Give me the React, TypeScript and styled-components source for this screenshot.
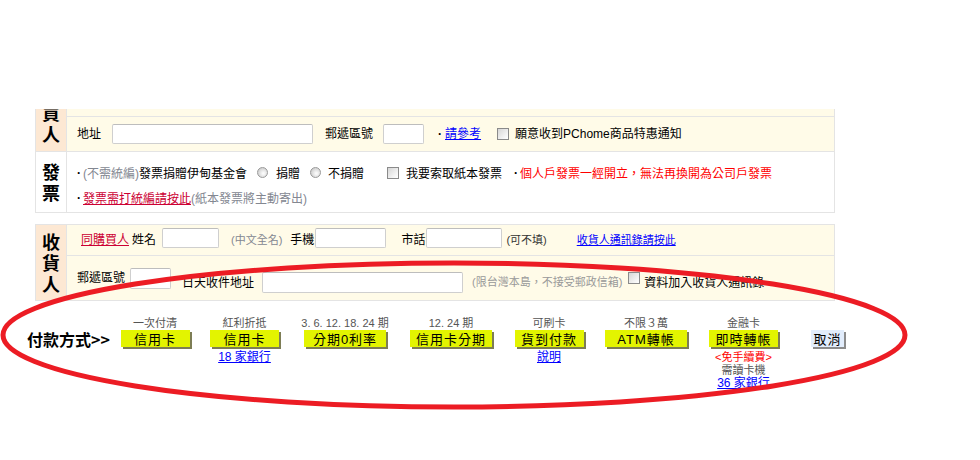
import { FC, ReactNode } from 'react';
import styled, { createGlobalStyle } from 'styled-components';

const GlobalStyle = createGlobalStyle`
  html, body {
    margin: 0;
    padding: 0;
    background: #fff;
  }
  body {
    font-family: "Liberation Sans", "Noto Sans CJK TC", sans-serif;
    font-size: 12px;
    color: #000;
  }
`;

const Page = styled.div`
  position: relative;
  width: 980px;
  height: 460px;
  overflow: hidden;
  padding-top: 109px;
  box-sizing: border-box;
`;

const Block = styled.div<{ $white?: boolean; $top?: boolean; $mt?: number; $h: number }>`
  display: grid;
  grid-template-columns: 31px 1fr;
  grid-template-rows: 100%;
  width: 800px;
  height: ${(p) => p.$h}px;
  margin-left: 35px;
  margin-top: ${(p) => p.$mt ?? 0}px;
  border: 1px solid #e4e4e4;
  border-top: ${(p) => (p.$top ? '1px solid #e4e4e4' : 'none')};
  background: ${(p) => (p.$white ? '#fff' : '#fffbe8')};
  box-sizing: border-box;
  overflow: hidden;
`;

const Label = styled.div<{ $white?: boolean; $bottom?: boolean }>`
  display: flex;
  flex-direction: column;
  align-items: center;
  justify-content: ${(p) => (p.$bottom ? 'flex-end' : 'center')};
  padding-bottom: ${(p) => (p.$bottom ? 7 : 0)}px;
  min-height: 0;
  overflow: hidden;
  background: ${(p) => (p.$white ? '#fff' : '#fde8d3')};
  border-right: 1px solid #e4e4e4;
  font-family: "Noto Sans CJK TC", sans-serif;
  font-weight: 700;
  font-size: 18px;
  line-height: 21px;
  span {
    display: block;
    flex-shrink: 0;
    height: 21px;
  }
`;

const Rows = styled.div`
  display: flex;
  flex-direction: column;
`;

const Row = styled.div<{ $h: number; $line?: boolean; $pad?: number }>`
  display: flex;
  align-items: center;
  height: ${(p) => p.$h}px;
  flex-shrink: 0;
  padding-left: ${(p) => p.$pad ?? 10}px;
  border-bottom: ${(p) => (p.$line ? '1px solid #e4e4e4' : 'none')};
  white-space: nowrap;
  line-height: 14px;
`;

const Lines = styled.div`
  display: flex;
  flex-direction: column;
  padding: 8px 0 2px 10px;
`;

const Line = styled.div`
  display: flex;
  align-items: center;
  height: 25px;
  white-space: nowrap;
`;

const Text = styled.span<{ $ml?: number; $tone?: 'gray' | 'note' | 'red' | 'dark'; $size?: number; $dy?: number }>`
  margin-left: ${(p) => p.$ml ?? 0}px;
  font-size: ${(p) => p.$size ?? 12}px;
  position: relative;
  top: ${(p) => p.$dy ?? 0}px;
  color: ${(p) =>
    p.$tone === 'gray' ? '#838791' : p.$tone === 'note' ? '#999' : p.$tone === 'red' ? '#ff0000' : p.$tone === 'dark' ? '#333' : '#000'};
`;

const Dot = styled.span<{ $ml?: number }>`
  margin-left: ${(p) => p.$ml ?? 0}px;
  width: 6px;
  text-align: left;
  font-weight: 700;
  font-size: 12px;
`;

const Link = styled.a<{ $red?: boolean; $ml?: number; $size?: number }>`
  margin-left: ${(p) => p.$ml ?? 0}px;
  font-size: ${(p) => p.$size ?? 12}px;
  color: ${(p) => (p.$red ? '#cc0033' : '#0000ff')};
  text-decoration: underline;
  cursor: pointer;
`;

const Input = styled.span<{ $w: number; $h?: number; $ml?: number; $dy?: number }>`
  display: inline-block;
  width: ${(p) => p.$w}px;
  height: ${(p) => p.$h ?? 20}px;
  margin-left: ${(p) => p.$ml ?? 0}px;
  position: relative;
  top: ${(p) => p.$dy ?? 0}px;
  background: #fff;
  border: 1px solid #cfcfcf;
  border-top-color: #bdbdbd;
  border-radius: 2px;
  box-sizing: border-box;
`;

const Check = styled.span<{ $ml?: number; $dy?: number }>`
  display: inline-block;
  width: 12px;
  height: 12px;
  margin-left: ${(p) => p.$ml ?? 0}px;
  position: relative;
  top: ${(p) => p.$dy ?? 0}px;
  border: 1px solid #8a8a8a;
  background: linear-gradient(135deg, #d6d6d6, #f4f4f4 70%, #fff);
  box-sizing: border-box;
`;

const Radio = styled.span<{ $ml?: number }>`
  display: inline-block;
  width: 11px;
  height: 11px;
  margin-left: ${(p) => p.$ml ?? 0}px;
  border-radius: 50%;
  border: 1px solid #9a9a9a;
  background: radial-gradient(circle at 60% 60%, #fafafa 10%, #cfcfcf 75%);
  box-sizing: border-box;
`;

const Pay = styled.div`
  display: flex;
  align-items: flex-start;
  padding-left: 27px;
  margin-top: 16px;
`;

const PayTitle = styled.div`
  width: 83px;
  margin-top: 13px;
  font-family: "Noto Sans CJK TC", sans-serif;
  font-weight: 700;
  font-size: 16px;
  line-height: 18px;
  white-space: nowrap;
`;

const Col = styled.div<{ $w: number }>`
  display: flex;
  flex-direction: column;
  align-items: center;
  width: ${(p) => p.$w}px;
  white-space: nowrap;
`;

const Cap = styled.div`
  height: 13px;
  line-height: 13px;
  font-size: 11px;
  color: #555;
`;

const Btn = styled.div<{ $w: number; $cancel?: boolean }>`
  display: flex;
  align-items: center;
  justify-content: center;
  width: ${(p) => p.$w}px;
  height: 17px;
  background: ${(p) => (p.$cancel ? '#e2edfc' : '#e3f400')};
  box-shadow: 2px 2px 0 ${(p) => (p.$cancel ? '#8c8c8c' : '#7d7d55')};
  font-size: 13px;
  letter-spacing: 1px;
  color: #000;
  cursor: pointer;
`;

const Sub = styled.div<{ $first?: boolean; $tone?: 'red' | 'gray' }>`
  margin-top: ${(p) => (p.$first ? 4 : 0)}px;
  height: 13px;
  line-height: 13px;
  font-size: 11px;
  color: ${(p) => (p.$tone === 'red' ? '#ff0000' : '#555')};
`;

const Mark = styled.svg`
  position: absolute;
  left: 0;
  top: 0;
  pointer-events: none;
`;

type Method = {
  cap: string;
  label: string;
  col: number;
  btn: number;
  extra?: ReactNode;
};

const methods: Method[] = [
  { cap: '一次付清', label: '信用卡', col: 90, btn: 69 },
  { cap: '紅利折抵', label: '信用卡', col: 89, btn: 69, extra: <Sub $first><Link $size={12}>18 家銀行</Link></Sub> },
  { cap: '3. 6. 12. 18. 24 期', label: '分期0利率', col: 112, btn: 82 },
  { cap: '12. 24 期', label: '信用卡分期', col: 100, btn: 82 },
  { cap: '可刷卡', label: '貨到付款', col: 96, btn: 69, extra: <Sub $first><Link $size={12}>說明</Link></Sub> },
  { cap: '不限３萬', label: 'ATM轉帳', col: 98, btn: 82 },
  {
    cap: '金融卡',
    label: '即時轉帳',
    col: 97,
    btn: 69,
    extra: (
      <>
        <Sub $first $tone="red">&lt;免手續費&gt;</Sub>
        <Sub $tone="gray">需讀卡機</Sub>
        <Sub><Link $size={12}>36 家銀行</Link></Sub>
      </>
    ),
  },
];

const App: FC = () => {
  return (
    <Page>
      <GlobalStyle />

      {/* buyer block, scrolled so its top is cut off */}
      <Block $h={43}>
        <Label $bottom>
          <span>買</span>
          <span>人</span>
        </Label>
        <Rows>
          <Row $h={7} $line />
          <Row $h={34}>
            <Text>地址</Text>
            <Input $w={201} $ml={11} />
            <Text $ml={12}>郵遞區號</Text>
            <Input $w={41} $ml={10} />
            <Dot $ml={14}>·</Dot>
            <Link $ml={1}>請參考</Link>
            <Check $ml={16} />
            <Text $ml={6}>願意收到PChome商品特惠通知</Text>
          </Row>
        </Rows>
      </Block>

      <Block $white $h={61}>
        <Label $white>
          <span>發</span>
          <span>票</span>
        </Label>
        <Lines>
          <Line>
            <Dot>·</Dot>
            <Text $tone="gray">(不需統編)</Text>
            <Text>發票捐贈伊甸基金會</Text>
            <Radio $ml={10} />
            <Text $ml={8}>捐贈</Text>
            <Radio $ml={10} />
            <Text $ml={7}>不捐贈</Text>
            <Check $ml={23} />
            <Text $ml={7}>我要索取紙本發票</Text>
            <Dot $ml={12}>·</Dot>
            <Text $tone="red">個人戶發票一經開立，無法再換開為公司戶發票</Text>
          </Line>
          <Line>
            <Dot>·</Dot>
            <Link $red>發票需打統編請按此</Link>
            <Text $tone="gray">(紙本發票將主動寄出)</Text>
          </Line>
        </Lines>
      </Block>

      <Block $top $mt={11} $h={77}>
        <Label>
          <span>收</span>
          <span>貨</span>
          <span>人</span>
        </Label>
        <Rows>
          <Row $h={30} $line $pad={14}>
            <Link $red>同購買人</Link>
            <Text $ml={3}>姓名</Text>
            <Input $w={57} $ml={6} $dy={-2} />
            <Text $ml={12} $size={11} $tone="gray">(中文全名)</Text>
            <Text $ml={8}>手機</Text>
            <Input $w={71} $ml={1} $dy={-2} />
            <Text $ml={15}>市話</Text>
            <Input $w={76} $ml={1} $dy={-2} />
            <Text $ml={4} $size={11} $tone="dark">(可不填)</Text>
            <Link $ml={30} $size={11}>收貨人通訊錄請按此</Link>
          </Row>
          <Row $h={44}>
            <Text>郵遞區號</Text>
            <Input $w={41} $h={21} $ml={5} />
            <Text $ml={11} $dy={5}>日天收件地址</Text>
            <Input $w={201} $h={21} $ml={8} $dy={4} />
            <Text $ml={9} $size={11} $tone="note" $dy={4}>(限台灣本島，不接受郵政信箱)</Text>
            <Check $ml={6} $dy={0} />
            <Text $ml={4} $dy={5}>資料加入收貨人通訊錄</Text>
          </Row>
        </Rows>
      </Block>

      <Pay>
        <PayTitle>付款方式&gt;&gt;</PayTitle>
        {methods.map((m, i) => (
          <Col key={i} $w={m.col}>
            <Cap>{m.cap}</Cap>
            <Btn $w={m.btn}>{m.label}</Btn>
            {m.extra}
          </Col>
        ))}
        <Col $w={71}>
          <Cap />
          <Btn $w={33} $cancel>取消</Btn>
        </Col>
      </Pay>

      <Mark width={980} height={460} viewBox="0 0 980 460">
        <ellipse cx={454} cy={335} rx={451} ry={72} fill="none" stroke="#ec1c24" strokeWidth={5} />
      </Mark>
    </Page>
  );
};

export default App;
